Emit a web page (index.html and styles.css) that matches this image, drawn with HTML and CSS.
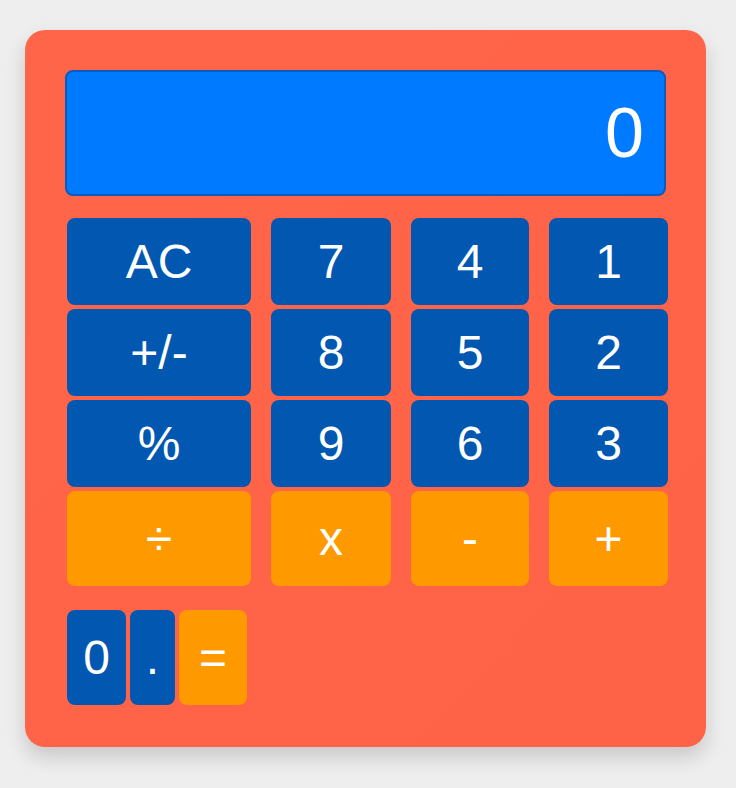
FILE: index.html
```html
<!DOCTYPE html>
<html lang="en">
<head>
<meta charset="utf-8">
<title>Calculator</title>
<link rel="stylesheet" href="styles.css">
</head>
<body>
<div class="calculator">
  <div class="display">0</div>
  <div class="keys">
    <button class="key">AC</button>
    <button class="key">7</button>
    <button class="key">4</button>
    <button class="key">1</button>
    <button class="key">+/-</button>
    <button class="key">8</button>
    <button class="key">5</button>
    <button class="key">2</button>
    <button class="key">%</button>
    <button class="key">9</button>
    <button class="key">6</button>
    <button class="key">3</button>
    <button class="key op">÷</button>
    <button class="key op">x</button>
    <button class="key op">-</button>
    <button class="key op">+</button>
  </div>
  <div class="bottom">
    <button class="key zero">0</button>
    <button class="key dot">.</button>
    <button class="key op equals">=</button>
  </div>
</div>
</body>
</html>
```

FILE: styles.css
```css
html, body {
  margin: 0;
  padding: 0;
}

body {
  background: #eeeeee;
  font-family: "Liberation Sans", Arial, sans-serif;
  padding: 30px 0 0 25px;
  height: 788px;
  box-sizing: border-box;
}

.calculator {
  width: 681px;
  height: 717px;
  box-sizing: border-box;
  padding: 40px;
  background: linear-gradient(135deg, #ff6549 0%, #ff6347 100%);
  border-radius: 20px;
  box-shadow: 0 10px 20px rgba(0, 0, 0, 0.16);
  display: flex;
  flex-direction: column;
}

.display {
  height: 126px;
  box-sizing: border-box;
  background: #007bff;
  border: 2px solid #0a5bbf;
  border-radius: 8px;
  color: #ffffff;
  font-size: 70px;
  display: flex;
  align-items: center;
  justify-content: flex-end;
  padding-right: 20px;
}

.keys {
  margin: 22px 0 0 2px;
  display: grid;
  grid-template-columns: 184px 120px 118px 119px;
  grid-template-rows: 87px 87px 87px 95px;
  column-gap: 20px;
  row-gap: 4px;
}

.key {
  border: none;
  margin: 0;
  padding: 0;
  border-radius: 8px;
  background: #0257b0;
  color: #ffffff;
  font-family: "Liberation Sans", Arial, sans-serif;
  font-size: 48px;
  display: flex;
  align-items: center;
  justify-content: center;
}

.key.op {
  background: #fe9900;
}

.bottom {
  margin: 24px 0 0 2px;
  display: flex;
  gap: 4px;
  height: 95px;
}

.zero {
  width: 59px;
}

.dot {
  width: 45px;
}

.equals {
  width: 68px;
}
```
